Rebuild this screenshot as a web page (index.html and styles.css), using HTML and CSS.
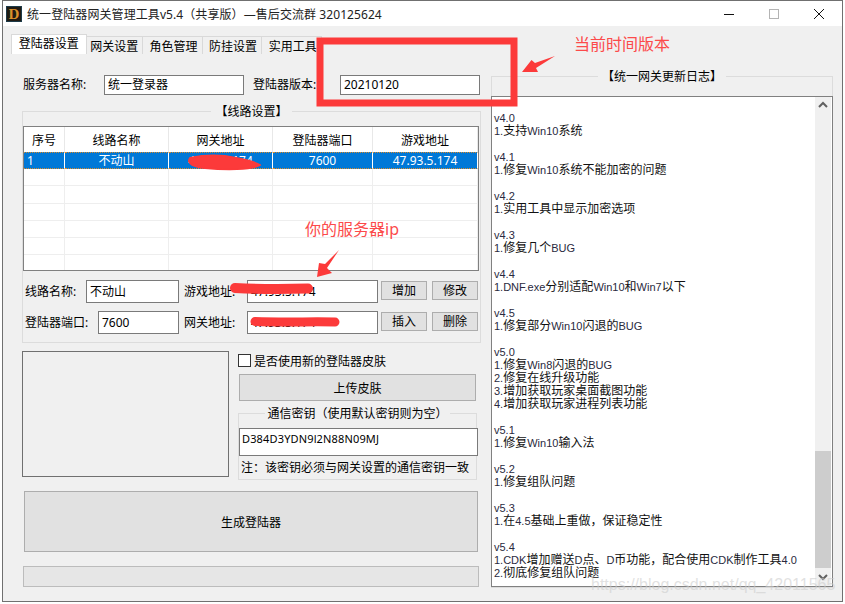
FILE: index.html
```html
<!DOCTYPE html>
<html lang="zh-CN">
<head>
    <meta charset="UTF-8">
    <title>统一登陆器网关管理工具</title>
    <link rel="stylesheet" href="styles.css">
</head>
<body>
<div class="window">
    <div class="titlebar">
        <svg class="app-icon" width="16" height="16" viewBox="0 0 16 16">
            <rect x="0.5" y="0.5" width="15" height="15" fill="#201a12" stroke="#1d3a48"/>
            <text x="8" y="13" text-anchor="middle" class="app-letter">D</text>
        </svg>
        <span class="title-text">统一登陆器网关管理工具v5.4（共享版）—售后交流群 320125624</span>
        <svg class="caption-icon" width="10" height="10" viewBox="0 0 10 10"><path d="M0 5.5H10" stroke="#111" fill="none"/></svg>
        <svg class="caption-icon" width="10" height="10" viewBox="0 0 10 10"><rect x="0.5" y="0.5" width="9" height="9" stroke="#b4b4b4" fill="none"/></svg>
        <svg class="caption-icon" width="10" height="10" viewBox="0 0 10 10"><path d="M0 0L10 10M10 0L0 10" stroke="#111" fill="none"/></svg>
    </div>

    <div class="tabs">
        <div class="tab active">登陆器设置</div>
        <div class="tab">网关设置</div>
        <div class="tab">角色管理</div>
        <div class="tab">防挂设置</div>
        <div class="tab">实用工具</div>
    </div>

    <div class="content">
        <div class="left-col">
            <div class="server-row">
                <label>服务器名称:</label>
                <div class="field">统一登录器</div>
                <label class="second">登陆器版本:</label>
                <div class="field">20210120</div>
            </div>

            <fieldset class="group lines">
                <legend>【线路设置】</legend>
                <table class="line-table">
                    <tr><th>序号</th><th>线路名称</th><th>网关地址</th><th>登陆器端口</th><th>游戏地址</th></tr>
                    <tr class="selected"><td class="num">1</td><td>不动山</td><td>47.93.5.174</td><td>7600</td><td>47.93.5.174</td></tr>
                    <tr><td></td><td></td><td></td><td></td><td></td></tr>
                    <tr><td></td><td></td><td></td><td></td><td></td></tr>
                    <tr><td></td><td></td><td></td><td></td><td></td></tr>
                    <tr><td></td><td></td><td></td><td></td><td></td></tr>
                    <tr><td></td><td></td><td></td><td></td><td></td></tr>
                    <tr class="last"><td></td><td></td><td></td><td></td><td></td></tr>
                </table>
                <div class="form-row">
                    <label class="label-a">线路名称:</label>
                    <div class="field input-a">不动山</div>
                    <label class="label-c">游戏地址:</label>
                    <div class="field input-c">47.93.5.174</div>
                    <button class="btn first">增加</button>
                    <button class="btn">修改</button>
                </div>
                <div class="form-row">
                    <label class="label-b">登陆器端口:</label>
                    <div class="field input-b">7600</div>
                    <label class="label-c">网关地址:</label>
                    <div class="field input-c">47.93.5.174</div>
                    <button class="btn first">插入</button>
                    <button class="btn">删除</button>
                </div>
            </fieldset>

            <div class="skin-area">
                <div class="preview"></div>
                <div class="skin-side">
                    <div class="check-row"><span class="checkbox"></span>是否使用新的登陆器皮肤</div>
                    <button class="upload">上传皮肤</button>
                    <fieldset class="group key">
                        <legend>通信密钥（使用默认密钥则为空）</legend>
                        <div class="field key-input">D384D3YDN9l2N88N09MJ</div>
                        <div class="key-note">注：该密钥必须与网关设置的通信密钥一致</div>
                    </fieldset>
                </div>
            </div>

            <button class="generate">生成登陆器</button>
            <div class="progress"></div>
        </div>

        <fieldset class="group right-col">
            <legend>【统一网关更新日志】</legend>
            <div class="log">
                <div class="log-text">
                    <div class="entry"><div><i>v4.0</i></div><div><i>1.</i>支持<i>Win10</i>系统</div></div>
                    <div class="entry"><div><i>v4.1</i></div><div><i>1.</i>修复<i>Win10</i>系统不能加密的问题</div></div>
                    <div class="entry"><div><i>v4.2</i></div><div><i>1.</i>实用工具中显示加密选项</div></div>
                    <div class="entry"><div><i>v4.3</i></div><div><i>1.</i>修复几个<i>BUG</i></div></div>
                    <div class="entry"><div><i>v4.4</i></div><div><i>1.DNF.exe</i>分别适配<i>Win10</i>和<i>Win7</i>以下</div></div>
                    <div class="entry"><div><i>v4.5</i></div><div><i>1.</i>修复部分<i>Win10</i>闪退的<i>BUG</i></div></div>
                    <div class="entry"><div><i>v5.0</i></div><div><i>1.</i>修复<i>Win8</i>闪退的<i>BUG</i></div><div><i>2.</i>修复在线升级功能</div><div><i>3.</i>增加获取玩家桌面截图功能</div><div><i>4.</i>增加获取玩家进程列表功能</div></div>
                    <div class="entry"><div><i>v5.1</i></div><div><i>1.</i>修复<i>Win10</i>输入法</div></div>
                    <div class="entry"><div><i>v5.2</i></div><div><i>1.</i>修复组队问题</div></div>
                    <div class="entry"><div><i>v5.3</i></div><div><i>1.</i>在<i>4.5</i>基础上重做，保证稳定性</div></div>
                    <div class="entry"><div><i>v5.4</i></div><div><i>1.CDK</i>增加赠送<i>D</i>点、<i>D</i>币功能，配合使用<i>CDK</i>制作工具<i>4.0</i></div><div><i>2.</i>彻底修复组队问题</div></div>
                </div>
                <div class="scrollbar">
                    <svg class="arrow" width="16" height="17" viewBox="0 0 16 17"><path d="M4 10L8 6L12 10" stroke="#606060" stroke-width="2" fill="none"/></svg>
                    <div class="track"></div>
                    <div class="thumb"></div>
                    <svg class="arrow" width="16" height="18" viewBox="0 0 16 18"><path d="M4 7L8 11L12 7" stroke="#606060" stroke-width="2" fill="none"/></svg>
                </div>
            </div>
        </fieldset>
    </div>

    <!-- red notes drawn on top of the screenshot -->
    <svg class="marks" width="841" height="602" viewBox="0 0 841 602">
        <rect x="318" y="41" width="194" height="62" fill="none" stroke="#fc3a3a" stroke-width="7"/>
        <g transform="translate(-2 0)" fill="#fc3a3a">
            <path d="M555 56L535 63L531.5 60L522 72L538 72L536 68Z"/>
            <path d="M339 250L325 264L319 263L317 277L332 273L327 268Z"/>
            <path d="M190 158C205 155 222 155 236 158C246 160 255 162 260 165C252 170 225 170 205 168C195 167 186 164 190 158Z" stroke="#fc3a3a" stroke-width="2" stroke-linejoin="round"/>
        </g>
        <path d="M233 288C255 289 285 289 306 288.5" fill="none" stroke="#fc3a3a" stroke-width="10" stroke-linecap="round"/>
        <path d="M253 321.5C280 322.5 310 321.5 333 322" fill="none" stroke="#fc3a3a" stroke-width="9" stroke-linecap="round"/>
    </svg>
    <div class="note note-version">当前时间版本</div>
    <div class="note note-ip">你的服务器ip</div>
    <div class="watermark">https://blog.csdn.net/qq_42011565</div>
</div>
</body>
</html>
```

FILE: styles.css
```css
* {
    box-sizing: border-box;
}
body {
    margin: 0;
    background: #fff;
    font-family: "Noto Sans", "Noto Sans CJK SC", sans-serif;
    font-size: 12px;
    color: #000;
}
label {
    line-height: 20px;
}
.window {
    position: relative;
    width: 841px;
    height: 602px;
    margin-left: 2px;
    background: #f0f0f0;
    border: 1px solid #707070;
    overflow: hidden;
}
.titlebar {
    display: flex;
    align-items: center;
    height: 25px;
    background: #fff;
    padding-left: 3px;
}
.app-letter {
    font-family: "Liberation Serif", serif;
    font-size: 15px;
    font-weight: bold;
    fill: #d9902a;
}
.title-text {
    flex: 1;
    margin-left: 5px;
    color: #222;
    letter-spacing: 0.08px;
}
.caption-icon {
    margin-right: 35px;
}
.caption-icon:last-child {
    margin-right: 18px;
}
.tabs {
    display: flex;
    margin: 10px 0 0 8px;
    height: 18px;
    width: 311px;
    background: #f0f0f0;
    border-top: 1px solid #d9d9d9;
}
.tab {
    width: 60px;
    padding-left: 2px;
    text-align: center;
    line-height: 20px;
    border-right: 1px solid #d9d9d9;
}
.tab.active {
    width: 76px;
    padding-left: 0;
    margin-top: -3px;
    height: 20px;
    line-height: 18px;
    background: #fff;
    border: 1px solid #d9d9d9;
    border-bottom: none;
}
.tab:nth-child(2) {
    width: 57px;
    padding-left: 0;
}
.content {
    display: flex;
    margin-top: 21px;
    padding-left: 19px;
}
.left-col {
    width: 459px;
}
.field {
    height: 20px;
    background: #fff;
    border: 1px solid #7a7a7a;
    padding-left: 3px;
    line-height: 18px;
    white-space: nowrap;
    overflow: hidden;
}
.server-row {
    display: grid;
    grid-template-columns: 82px 140px 96px 140px;
    padding-left: 0;
}
.server-row label {
    padding-left: 1px;
}
.server-row .second {
    padding-left: 9px;
}
.group {
    margin: 0;
    padding: 0;
    border: 1px solid #dcdcdc;
    min-width: 0;
}
.group legend {
    margin: 0 auto;
    padding: 0 4px;
    line-height: 18px;
    height: 16px;
}
.lines {
    margin-top: 8px;
    padding-top: 7px;
    padding-bottom: 8px;
}
.line-table {
    width: 456px;
    height: 145px;
    table-layout: fixed;
    border-collapse: separate;
    border-spacing: 0;
    background: #fff;
    border: 1px solid #808080;
}
.line-table th {
    height: 25px;
    padding: 0;
    font-weight: normal;
    border-right: 1px solid #e8e8e8;
}
.line-table th:nth-child(1) { width: 41px; }
.line-table th:nth-child(2) { width: 104px; }
.line-table th:nth-child(3) { width: 104px; }
.line-table th:nth-child(4) { width: 100px; }
.line-table td {
    height: 17px;
    padding: 0;
    text-align: center;
    line-height: 15px;
    border-right: 1px solid #eeeeee;
    border-bottom: 1px solid #eeeeee;
}
.line-table .last td {
    height: 15px;
    border-bottom: none;
}
.line-table .selected td {
    background: #0078d7;
    color: #fff;
    border-top: 1px dotted #d98a2a;
    border-bottom: 1px dotted #d98a2a;
    border-right-color: #fff;
}
.line-table .selected .num {
    text-align: left;
    padding-left: 3px;
}
.form-row {
    display: flex;
    align-items: flex-start;
    margin-top: 8px;
    padding-left: 2px;
}
.line-table + .form-row {
    margin-top: 9px;
}
.form-row label {
    line-height: 23px;
}
.form-row .field {
    height: 23px;
    line-height: 21px;
}
.label-a { width: 61px; }
.label-b { width: 73px; }
.label-c { width: 63px; margin-left: 5px; }
.input-a { width: 93px; }
.input-b { width: 81px; }
.input-c { width: 131px; }
button {
    font: inherit;
    color: inherit;
    padding: 0;
    background: #e1e1e1;
    border: 1px solid #adadad;
}
.btn {
    width: 46px;
    height: 19px;
    margin: 1px 0 0 5px;
    line-height: 16px;
}
.btn.first {
    margin-left: 3px;
}
.skin-area {
    display: flex;
    margin-top: 8px;
}
.preview {
    width: 207px;
    height: 126px;
    background: #f0f0f0;
    border: 1px solid #707070;
}
.skin-side {
    width: 240px;
    margin-left: 9px;
}
.check-row {
    display: flex;
    align-items: center;
    height: 15px;
    margin-top: 2px;
}
.checkbox {
    width: 13px;
    height: 13px;
    margin-right: 3px;
    background: #fff;
    border: 1px solid #333;
}
.upload {
    display: block;
    width: 237px;
    height: 27px;
    margin: 6px 0 0 1px;
}
.key {
    width: 239px;
    margin-top: 4px;
    padding-top: 7px;
}
.key legend {
    padding: 0 2px;
}
.key-input {
    width: 239px;
    height: 28px;
    margin-left: 0;
    padding-left: 2px;
    line-height: 20px;
    font-size: 11px;
    letter-spacing: 0.15px;
}
.key-note {
    line-height: 23px;
    padding-left: 2px;
    white-space: nowrap;
}
.generate {
    display: block;
    width: 454px;
    height: 61px;
    margin: 11px 0 0 2px;
}
.progress {
    width: 456px;
    height: 21px;
    margin: 14px 0 0 1px;
    background: #e6e6e6;
    border: 1px solid #bcbcbc;
}
.right-col {
    width: 342px;
    height: 520px;
    margin: -7px 0 0 10px;
    padding-top: 12px;
}
.log {
    display: flex;
    height: 491px;
    margin: 0 -1px;
    background: #fff;
    border: 1px solid #808080;
}
.log-text {
    flex: 1;
    padding: 14px 0 0 2px;
    line-height: 13px;
    color: #111;
    white-space: nowrap;
    overflow: hidden;
}
.log-text i {
    font-family: "Liberation Sans", sans-serif;
    font-style: normal;
    font-size: 11px;
    line-height: 0;
    color: #2a2a40;
}
.entry {
    margin-bottom: 13px;
}
.scrollbar {
    display: flex;
    flex-direction: column;
    width: 16px;
    margin-right: 1px;
    background: #f0f0f0;
}
.track {
    flex: 1;
}
.thumb {
    height: 117px;
    background: #cdcdcd;
}
.arrow {
    display: block;
    flex: none;
}
.marks {
    position: absolute;
    top: -1px;
    left: -1px;
    pointer-events: none;
}
.note {
    position: absolute;
    font-size: 16px;
    line-height: 20px;
    color: #fc4a4a;
    white-space: nowrap;
}
.note-version {
    top: 33px;
    left: 571px;
}
.note-ip {
    top: 218px;
    left: 302px;
}
.watermark {
    position: absolute;
    top: 574px;
    left: 588px;
    font-family: "Liberation Sans", sans-serif;
    font-size: 16px;
    line-height: 20px;
    color: rgba(205, 205, 205, 0.6);
    white-space: nowrap;
}
```
